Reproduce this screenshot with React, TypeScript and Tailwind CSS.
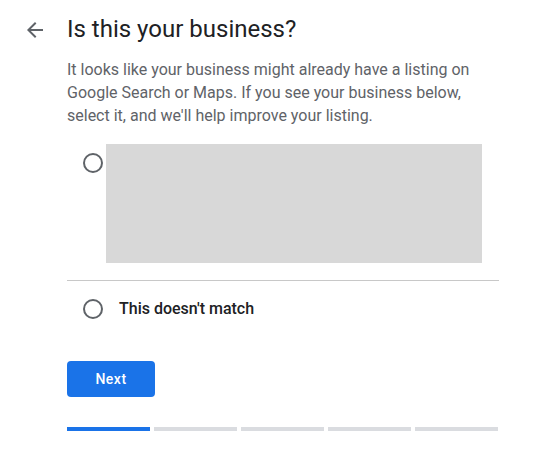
import React from "react";

function Radio() {
    return <div className="w-5 h-5 shrink-0 rounded-full border-2 border-[#5f6368] bg-white" />;
}

export default function App() {
    const steps = [true, false, false, false, false];
    return (
        <div className="w-[558px] h-[465px] bg-white flex font-['Roboto',sans-serif]">
            <div className="w-[67px] shrink-0 pt-[22px] pl-[27px]">
                <svg width="16" height="16" viewBox="0 0 16 16" className="text-[#5f6368]">
                    <path d="M16 7H3.83l5.59-5.59L8 0 0 8l8 8 1.41-1.41L3.83 9H16z" fill="currentColor" />
                </svg>
            </div>
            <div className="w-[432px] flex flex-col">
                <h1 className="mt-[13px] text-2xl leading-8 text-[#202124]">Is this your business?</h1>
                <p className="mt-[13px] text-base leading-[23px] text-[#5f6368]">
                    It looks like your business might already have a listing on Google Search or Maps. If you see your business below, select it, and we'll help improve your listing.
                </p>
                <div className="mt-[17px] flex items-start pl-4">
                    <div className="mt-[9px]"><Radio /></div>
                    <div className="ml-[3px] w-[376px] h-[119px] bg-[#d8d8d8]" />
                </div>
                <div className="mt-[17px] h-px bg-[#c8c8c8]" />
                <div className="mt-[16px] flex items-center pl-4 gap-4">
                    <Radio />
                    <span className="text-base font-medium text-[#202124]">This doesn't match</span>
                </div>
                <button className="mt-[40px] w-[88px] h-9 rounded bg-[#1a73e8] text-white text-sm font-medium tracking-[0.5px]">
                    Next
                </button>
                <div className="mt-[30px] flex gap-1 w-[431px]">
                    {steps.map((on, i) => (
                        <div key={i} className={on ? "flex-1 h-1 bg-[#1a73e8]" : "flex-1 h-1 bg-[#dadce0]"} />
                    ))}
                </div>
            </div>
        </div>
    );
}
